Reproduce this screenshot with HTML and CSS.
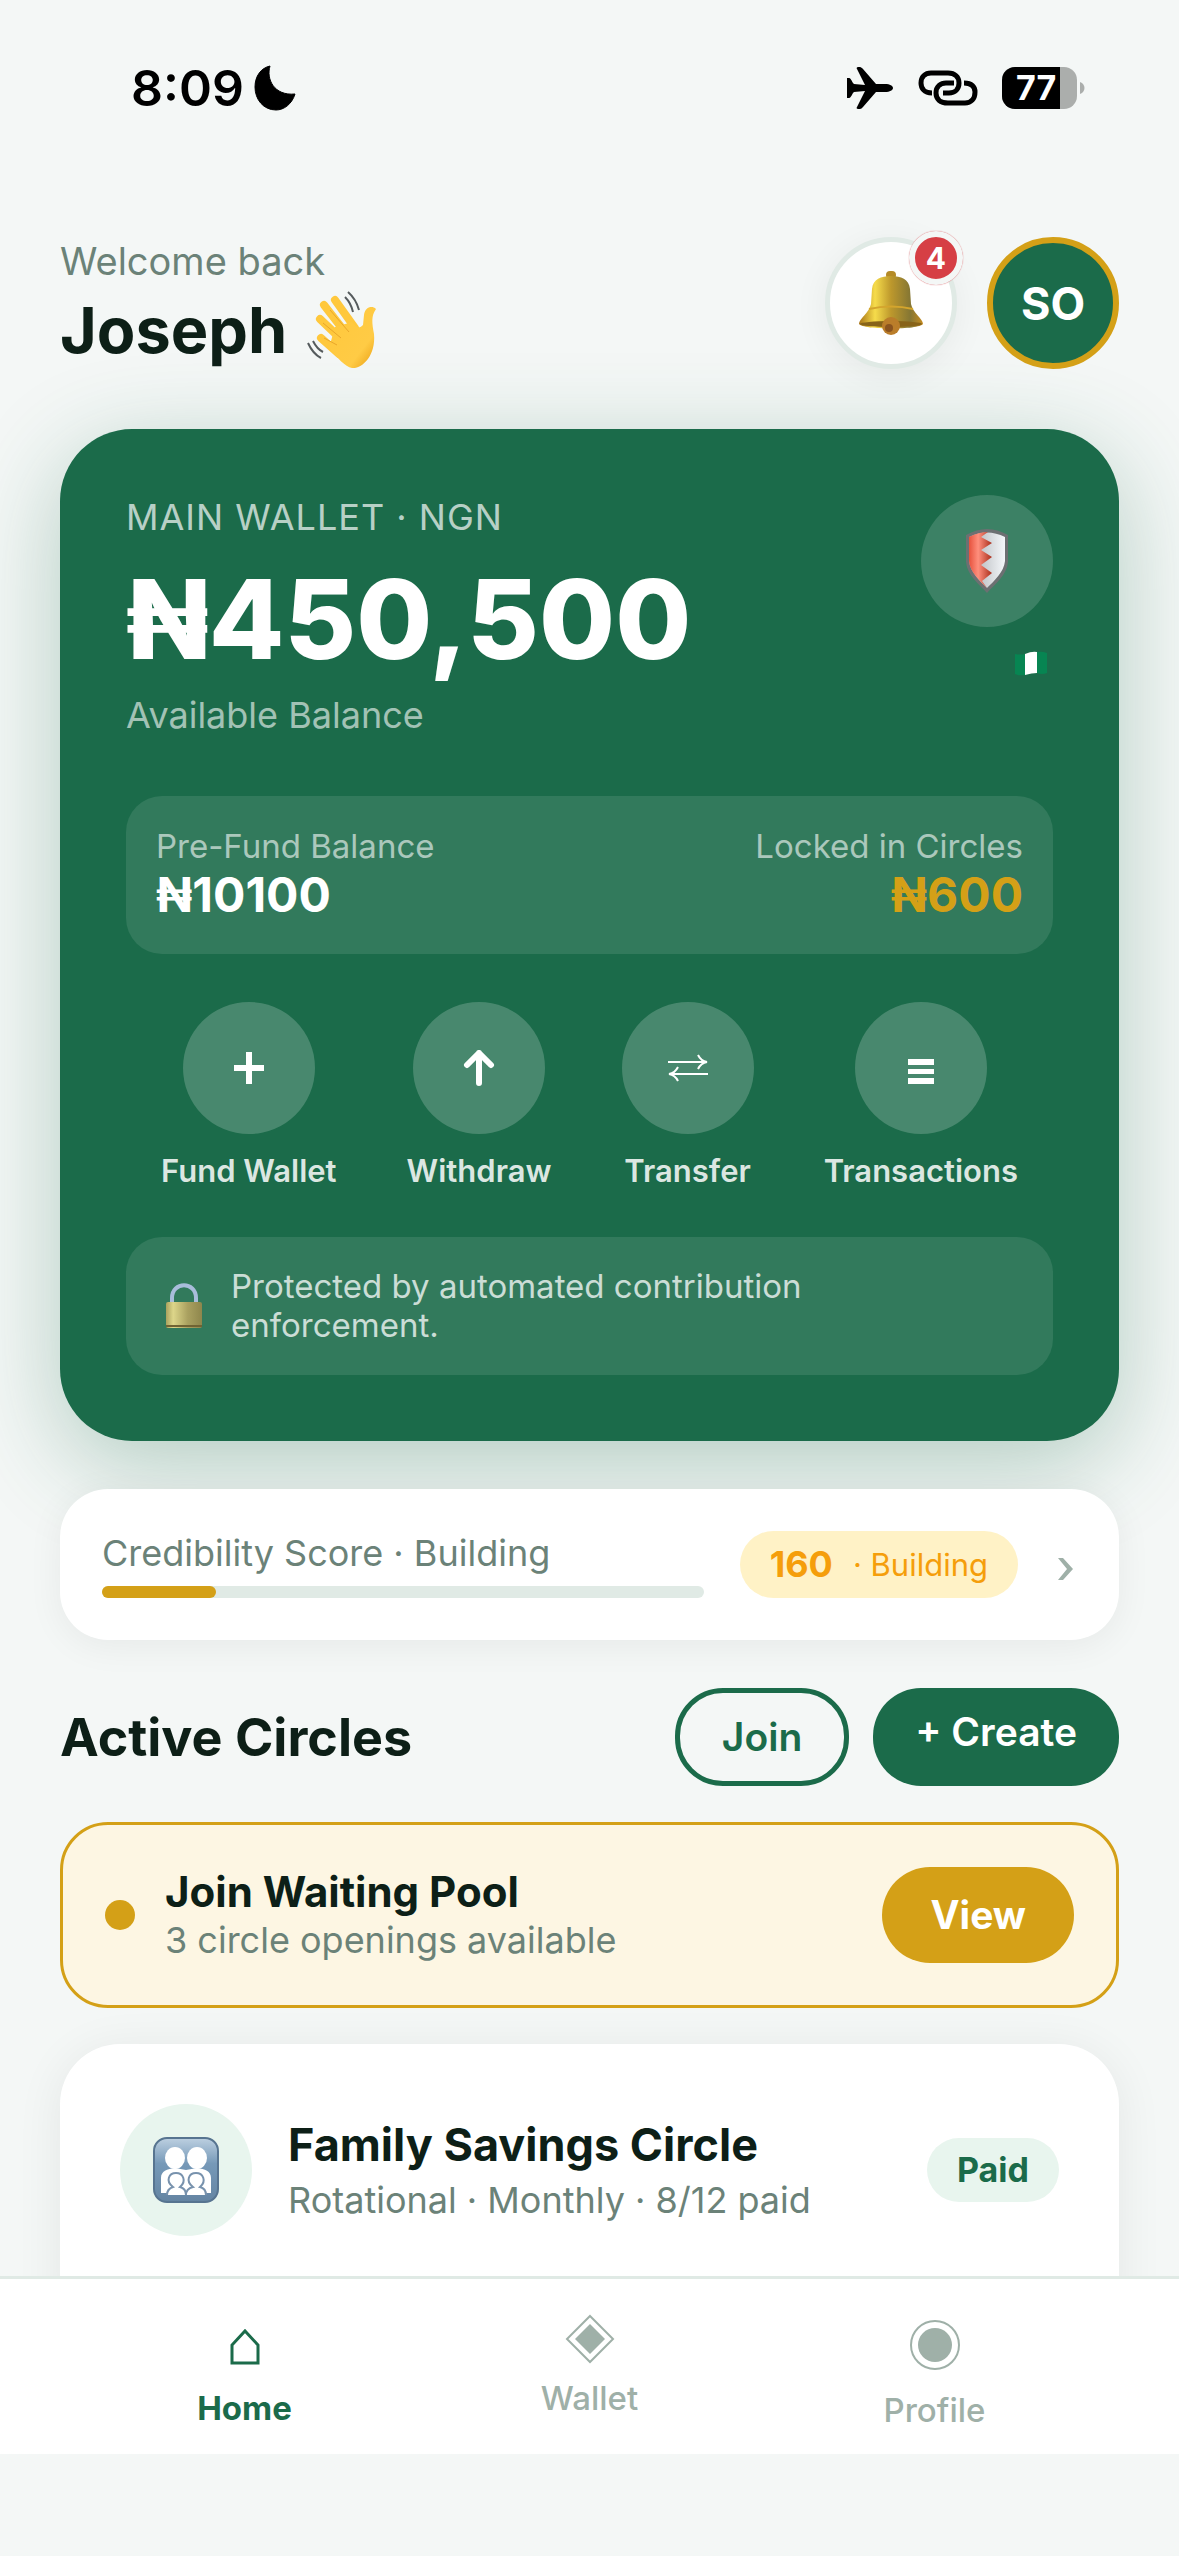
FILE: index.html
```html
<!DOCTYPE html>
<html lang="en">
<head>
  <meta charset="UTF-8" />
  <meta name="viewport" content="width=device-width, initial-scale=1.0"/>
  <title>Home</title>
  <link rel="stylesheet" href="styles.css">
</head>
<body>
  <div class="status-bar">
    <div class="status-left">
      <span>8:09</span>
      <svg width="42" height="46" viewBox="0 0 42 46"><path d="M16 1C12 14 20 31 41 29C38 39 30 45 22 45C9 45 1 34 1 22C1 11 7 3 16 1Z" stroke="#000" stroke-width="1" stroke-linejoin="round"/></svg>
    </div>
    <div class="status-right">
      <svg width="48" height="42" viewBox="0 0 48 42"><path d="M1 11H3C4 11 5 12 7 16L8 17L19 18L11 2C10 1 11 0 12 0H14C15 0 16 1 17 2L30 17H39C44 17 47 19 47 21C47 23 44 25 39 25H30L17 40C16 41 15 42 14 42H12C11 42 10 41 11 40L19 24L8 25L7 26C5 30 4 31 3 31H1Z"/></svg>
      <svg class="link-icon" width="60" height="36" viewBox="0 0 60 36" fill="none" stroke="#000" stroke-width="5"><path d="M14 23C6 23 3 18 3 13C3 7 7 3 13 3H30C37 3 41 7 41 13C41 19 37 23 31 23H25"/><path d="M46 13C54 13 57 17 57 22C57 29 53 33 47 33H30C22 33 18 29 18 23C18 16 23 13 28 13H36"/></svg>
      <div class="battery"><span class="battery-level">77</span></div>
      <svg class="battery-tip" width="5" height="14" viewBox="0 0 5 14"><path d="M0 1C6 3 6 11 0 13Z" fill="#abaeac"/></svg>
    </div>
  </div>

  <main>
    <header class="header">
      <div class="greeting">
        <span class="welcome">Welcome back</span>
        <h1>Joseph
          <svg width="70" height="78" viewBox="0 0 70 78" role="img" aria-label="Waving hand">
            <defs><linearGradient id="hand" x1="0" y1="0" x2="1" y2="1"><stop offset="0" stop-color="#ffc83c"/><stop offset=".7" stop-color="#ffcb45"/><stop offset="1" stop-color="#e79a0d"/></linearGradient></defs>
            <g stroke="#ffc83c" stroke-linecap="round" fill="none"><path d="M28 9L48 37" stroke-width="8"/><path d="M17 14L38 41" stroke-width="8"/><path d="M13 28L35 49" stroke-width="8"/><path d="M14 47L32 63" stroke-width="8"/></g>
            <path d="M28 36L45 31Q51 40 56 34L57 24C58 16 65 14 69 18C64 25 65 32 67 43C69 65 55 78 45 77C38 76 31 67 22 57Z" fill="url(#hand)"/>
            <path d="M23 19L42 41M16 32L34 47M17 47L30 54" stroke="#e9a72a" stroke-width="1" fill="none"/>
            <path d="M41 1Q49 8 52 19M38 6Q44 12 46 21M1 52Q6 63 14 67M6 50Q10 58 16 61" fill="none" stroke="#555b5d" stroke-width="2"/>
          </svg>
        </h1>
      </div>
      <div class="header-actions">
        <button class="bell-btn" aria-label="Notifications">
          <svg width="66" height="66" viewBox="0 0 66 66">
            <defs><linearGradient id="gold"><stop offset="0" stop-color="#a87417"/><stop offset=".25" stop-color="#f6dc4b"/><stop offset=".5" stop-color="#bd982c"/><stop offset=".8" stop-color="#857633"/><stop offset="1" stop-color="#c58b20"/></linearGradient></defs>
            <rect x="28" y="1" width="10" height="8" rx="4" fill="#b58b27"/>
            <path d="M1 54C1 49 11 43 13 34L14 19C15 9 23 6 33 6C43 6 51 9 52 19L53 34C55 43 65 49 65 54C61 60 5 60 1 54Z" fill="url(#gold)"/>
            <path d="M11 39Q33 34 55 39" stroke="#d4a52d" stroke-width="2" fill="none"/>
            <ellipse cx="33" cy="54" rx="31" ry="3" fill="#876319"/>
            <circle cx="33" cy="56" r="9" fill="#ba7d2a"/><circle cx="31" cy="58" r="4" fill="#8b541f"/>
          </svg>
          <span class="badge">4</span>
        </button>
        <button class="avatar">SO</button>
      </div>
    </header>

    <section class="wallet">
      <div class="wallet-top">
        <div class="wallet-balance">
          <span class="wallet-label">MAIN WALLET · NGN</span>
          <span class="amount">₦450,500</span>
          <span class="available">Available Balance</span>
        </div>
        <div class="wallet-side">
          <div class="shield">
            <svg width="44" height="66" viewBox="0 0 44 66">
              <defs><linearGradient id="red"><stop offset="0" stop-color="#e6523d"/><stop offset=".4" stop-color="#ff8f7d"/><stop offset="1" stop-color="#a92e1b"/></linearGradient><linearGradient id="silver"><stop offset="0" stop-color="#a9acb0"/><stop offset="1" stop-color="#f4f7fa"/></linearGradient></defs>
              <path d="M1 7Q22-5 43 7V34C42 47 30 56 22 65C14 56 2 47 1 34Z" fill="#6c7072"/>
              <path d="M4 9Q22 0 40 9V33C39 44 29 53 22 60C15 53 5 44 4 33Z" fill="url(#silver)"/>
              <path d="M4 9Q14 4 23 4L16 9L27 15L16 22L27 29L16 37L27 45L17 53L22 60C15 53 5 44 4 33Z" fill="url(#red)"/>
            </svg>
          </div>
          <svg class="flag" width="34" height="25" viewBox="0 0 34 25"><path d="M1 3Q6 4 11 3V24Q5 25 1 23Z" fill="#078552"/><path d="M11 3Q18 0 23 1V22Q18 22 11 24Z" fill="#fff"/><path d="M23 1Q28 0 33 2V22Q28 24 23 22Z" fill="#078552"/></svg>
        </div>
      </div>

      <div class="sub-balances">
        <div class="sub-balance">
          <span class="sub-label">Pre-Fund Balance</span>
          <span class="sub-value">₦10100</span>
        </div>
        <div class="sub-balance right">
          <span class="sub-label">Locked in Circles</span>
          <span class="sub-value gold">₦600</span>
        </div>
      </div>

      <div class="actions">
        <button class="action">
          <span class="action-icon"><svg width="32" height="32" viewBox="0 0 32 32" stroke="#fff" stroke-width="6"><path d="M16 0V32M1 16H31"/></svg></span>
          Fund Wallet
        </button>
        <button class="action">
          <span class="action-icon"><svg width="32" height="36" viewBox="0 0 32 36" fill="none" stroke="#fff" stroke-width="6" stroke-linecap="round" stroke-linejoin="round"><path d="M16 33V3M4 15L16 3L28 15"/></svg></span>
          Withdraw
        </button>
        <button class="action">
          <span class="action-icon"><svg width="42" height="28" viewBox="0 0 42 28" fill="none" stroke="#fff" stroke-width="2"><path d="M1 8H40M31 1Q34 7 40 8Q34 9 31 15M41 20H2M11 13Q8 19 2 20Q8 21 11 27"/></svg></span>
          Transfer
        </button>
        <button class="action">
          <span class="action-icon"><svg width="26" height="32" viewBox="0 0 26 32" fill="#fff"><path d="M0 7H26V13H0ZM0 17H26V22H0ZM0 26H26V32H0Z"/></svg></span>
          Transactions
        </button>
      </div>

      <div class="protected">
        <svg width="40" height="46" viewBox="0 0 40 46">
          <defs><linearGradient id="lock"><stop offset="0" stop-color="#aaa25e"/><stop offset=".2" stop-color="#ddd68a"/><stop offset=".6" stop-color="#aaa160"/><stop offset="1" stop-color="#8e864c"/></linearGradient></defs>
          <path d="M8 20V15C8-2 32-2 32 15V20" fill="none" stroke="#a9bddb" stroke-width="4"/>
          <rect x="2" y="19" width="36" height="26" rx="2" fill="url(#lock)"/><path d="M2 43H38" stroke="#716333" stroke-width="2"/>
        </svg>
        <p>Protected by automated contribution<br>enforcement.</p>
      </div>
    </section>

    <section class="score">
      <div class="score-info">
        <span class="score-title">Credibility Score · Building</span>
        <div class="bar"><div class="bar-fill" style="width: 19%"></div></div>
      </div>
      <div class="score-badge"><strong>160</strong><span>· Building</span></div>
      <svg width="23" height="32" viewBox="0 0 23 32" fill="#9fb0a8"><path d="M4 9H9L19 20L9 31H4L13 20Z"/></svg>
    </section>

    <div class="section-head">
      <h2>Active Circles</h2>
      <div class="section-actions">
        <button class="btn-join">Join</button>
        <button class="btn-create">+ Create</button>
      </div>
    </div>

    <section class="pool">
      <span class="dot"></span>
      <div class="pool-text">
        <h3>Join Waiting Pool</h3>
        <p>3 circle openings available</p>
      </div>
      <button class="btn-view">View</button>
    </section>

    <section class="circle-card">
      <div class="circle-icon">
        <svg width="66" height="66" viewBox="0 0 66 66">
          <defs><linearGradient id="tile" x1="0" y1="0" x2="0" y2="1"><stop offset="0" stop-color="#bdd0e1"/><stop offset=".4" stop-color="#7699b8"/><stop offset="1" stop-color="#6484a2"/></linearGradient></defs>
          <rect x="1" y="1" width="64" height="64" rx="13" fill="url(#tile)" stroke="#577490" stroke-width="2"/>
          <g fill="#fff"><ellipse cx="22" cy="21" rx="10" ry="11"/><ellipse cx="44" cy="21" rx="10" ry="11"/><path d="M8 56V41C8 34 14 32 22 31L33 33L44 31C52 32 58 34 58 41V56Z"/></g>
          <g fill="#fff" stroke="#7892ad" stroke-width="2"><path d="M14 58C14 53 17 51 20 50C12 44 16 36 23 36C30 36 34 44 27 50C31 51 33 54 33 58"/><path d="M33 58C33 54 36 51 40 50C32 44 36 36 43 36C50 36 54 44 47 50C51 51 53 54 53 58"/></g>
        </svg>
      </div>
      <div class="circle-text">
        <h3>Family Savings Circle</h3>
        <p>Rotational · Monthly · 8/12 paid</p>
      </div>
      <span class="paid">Paid</span>
    </section>
  </main>

  <nav class="tabs">
    <a href="#" class="active">
      <svg width="50" height="60" viewBox="0 0 50 60" fill="none" stroke="#1b6b4a" stroke-width="3"><path d="M12 49V31L25 17L38 31V49Z"/></svg>
      Home
    </a>
    <a href="#">
      <svg width="50" height="50" viewBox="0 0 50 50"><path d="M25 2L48 25L25 48L2 25Z" fill="none" stroke="#9fb0a8" stroke-width="2"/><path d="M25 10L40 25L25 40L10 25Z" fill="#9fb0a8"/></svg>
      Wallet
    </a>
    <a href="#">
      <svg width="50" height="62" viewBox="0 0 50 62"><circle cx="25" cy="31" r="24" fill="none" stroke="#9fb0a8" stroke-width="2"/><circle cx="25" cy="31" r="17" fill="#9fb0a8"/></svg>
      Profile
    </a>
  </nav>
</body>
</html>
```
FILE: styles.css
```css
* {
  box-sizing: border-box;
}
body {
  margin: 0;
  height: 100vh;
  padding-bottom: 102px;
  display: flex;
  flex-direction: column;
  overflow: hidden;
  background: #f4f7f6;
  color: #0d1f17;
  font-family: Inter, "Liberation Sans", sans-serif;
  font-size: 36px;
}
h1, h2, h3, p {
  margin: 0;
}
button {
  border: none;
  padding: 0;
  background: none;
  font-family: inherit;
  cursor: pointer;
}
svg {
  display: block;
  flex: none;
}

/* status bar */
.status-bar {
  display: flex;
  justify-content: space-between;
  align-items: center;
  flex: none;
  height: 175px;
  padding: 0 94px 0 131px;
  color: #000;
}
.status-left, .status-right {
  display: flex;
  align-items: center;
}
.status-left {
  gap: 10px;
  font-size: 50px;
  font-weight: 600;
}
.link-icon {
  margin: 0 24px;
}
.battery {
  width: 75px;
  height: 42px;
  border-radius: 13px;
  overflow: hidden;
  background: #abaeac;
}
.battery-level {
  display: block;
  width: 58px;
  padding-left: 14px;
  background: #000;
  color: #fff;
  font-size: 34px;
  font-weight: 700;
  line-height: 42px;
}
.battery-tip {
  margin-left: 3px;
}

main {
  flex: 1;
  min-height: 0;
  overflow: hidden;
  padding: 62px 60px 0;
}

/* header */
.header {
  display: flex;
  justify-content: space-between;
  align-items: center;
  margin-bottom: 60px;
}
.greeting {
  display: flex;
  flex-direction: column;
  gap: 6px;
}
.welcome {
  font-size: 38px;
  line-height: 48px;
  color: #6b8278;
}
h1 {
  display: flex;
  align-items: center;
  gap: 20px;
  font-size: 63px;
  line-height: 78px;
}
.header-actions {
  display: flex;
  gap: 30px;
}
.bell-btn, .avatar {
  width: 132px;
  height: 132px;
  border-radius: 50%;
}
.bell-btn {
  position: relative;
  display: flex;
  align-items: center;
  justify-content: center;
  background: #fff;
  border: 5px solid #e0eae5;
  box-shadow: 0 6px 36px rgba(0, 0, 0, 0.06);
}
.badge {
  position: absolute;
  top: -11px;
  right: -11px;
  width: 54px;
  height: 54px;
  border: 6px solid #f4f7f6;
  border-radius: 50%;
  background: #d63f45;
  box-shadow: 0 0 1px #d63f45;
  color: #fff;
  font-size: 30px;
  font-weight: 700;
  line-height: 42px;
}
.avatar {
  border: 6px solid #d4a017;
  background: #1b6b4a;
  color: #fff;
  font-size: 45px;
  font-weight: 700;
}

/* wallet card */
.wallet {
  padding: 66px;
  margin-bottom: 48px;
  border-radius: 72px;
  background: #1b6b4a;
  color: #fff;
  box-shadow: 0 24px 96px rgba(27, 107, 74, 0.3);
}
.wallet-top {
  display: flex;
  justify-content: space-between;
  margin-bottom: 59px;
}
.wallet-balance {
  display: flex;
  flex-direction: column;
}
.wallet-label {
  margin-bottom: 6px;
  line-height: 44px;
  letter-spacing: 1px;
  color: rgba(255, 255, 255, 0.7);
}
.amount {
  font-size: 110px;
  font-weight: 800;
  line-height: 148px;
}
.available {
  line-height: 44px;
  color: rgba(255, 255, 255, 0.6);
}
.wallet-side {
  display: flex;
  flex-direction: column;
  align-items: flex-end;
  gap: 24px;
}
.shield {
  display: flex;
  align-items: center;
  justify-content: center;
  width: 132px;
  height: 132px;
  border-radius: 50%;
  background: rgba(255, 255, 255, 0.15);
}
.flag {
  margin-right: 5px;
}
.sub-balances {
  display: flex;
  justify-content: space-between;
  padding: 30px;
  margin-bottom: 48px;
  border-radius: 36px;
  background: rgba(255, 255, 255, 0.1);
}
.sub-balance {
  display: flex;
  flex-direction: column;
}
.right {
  align-items: flex-end;
}
.sub-label {
  font-size: 33px;
  line-height: 40px;
  color: rgba(255, 255, 255, 0.6);
}
.sub-value {
  font-size: 48px;
  font-weight: 700;
  line-height: 58px;
}
.gold {
  color: #d4a017;
}
.actions {
  display: flex;
  justify-content: space-around;
  margin-bottom: 48px;
}
.action {
  display: flex;
  flex-direction: column;
  align-items: center;
  gap: 18px;
  color: rgba(255, 255, 255, 0.85);
  font-size: 31px;
  font-weight: 600;
  line-height: 37px;
}
.action-icon {
  display: flex;
  align-items: center;
  justify-content: center;
  width: 132px;
  height: 132px;
  border-radius: 50%;
  background: rgba(255, 255, 255, 0.2);
}
.protected {
  display: flex;
  align-items: center;
  gap: 27px;
  padding: 30px 38px;
  border-radius: 36px;
  background: rgba(255, 255, 255, 0.1);
  color: rgba(255, 255, 255, 0.75);
  font-size: 33px;
  line-height: 39px;
}

/* credibility */
.score {
  display: flex;
  align-items: center;
  gap: 36px;
  padding: 42px;
  margin-bottom: 48px;
  border-radius: 48px;
  background: #fff;
  box-shadow: 0 6px 36px rgba(0, 0, 0, 0.06);
}
.score-info {
  flex: 1;
}
.score-title {
  display: block;
  margin-bottom: 10px;
  line-height: 45px;
  color: #6b8278;
}
.bar {
  height: 12px;
  border-radius: 6px;
  background: #e0eae5;
}
.bar-fill {
  height: 100%;
  border-radius: 6px;
  background: #d4a017;
}
.score-badge {
  display: flex;
  align-items: center;
  gap: 20px;
  padding: 0 30px;
  border-radius: 34px;
  background: #fff2c6;
  color: #f59e0b;
  font-size: 31px;
  line-height: 67px;
}
.score-badge strong {
  font-size: 36px;
}

/* active circles */
.section-head {
  display: flex;
  align-items: center;
  justify-content: space-between;
  margin-bottom: 36px;
}
h2 {
  font-size: 52px;
}
.section-actions {
  display: flex;
  gap: 24px;
}
.btn-join, .btn-create, .btn-view {
  padding: 20px 42px;
  border-radius: 48px;
  font-size: 39px;
  font-weight: 600;
  line-height: 48px;
}
.btn-join {
  border: 5px solid #1b6b4a;
  color: #1b6b4a;
}
.btn-create {
  display: flex;
  align-items: flex-start;
  background: #1b6b4a;
  color: #fff;
}
.pool {
  display: flex;
  align-items: center;
  gap: 30px;
  padding: 42px;
  margin-bottom: 36px;
  border: 3px solid #d4a017;
  border-radius: 48px;
  background: #fdf6e3;
}
.dot {
  width: 30px;
  height: 30px;
  border-radius: 50%;
  background: #d4a017;
}
.pool-text, .circle-text {
  flex: 1;
}
.pool h3 {
  font-size: 42px;
  line-height: 50px;
}
.pool p {
  line-height: 46px;
  color: #6b8278;
}
.btn-view {
  padding: 24px 48px;
  background: #d4a017;
  color: #fff;
  font-weight: 700;
}
.circle-card {
  display: flex;
  align-items: center;
  gap: 36px;
  padding: 60px 60px 120px;
  border-radius: 60px;
  background: #fff;
  box-shadow: 0 6px 48px rgba(0, 0, 0, 0.07);
}
.circle-icon {
  display: flex;
  align-items: center;
  justify-content: center;
  width: 132px;
  height: 132px;
  border-radius: 50%;
  background: #e8f5ee;
}
.circle-card h3 {
  font-size: 45px;
  line-height: 60px;
}
.circle-card p {
  line-height: 50px;
  color: #6b8278;
}
.paid {
  padding: 0 30px;
  border-radius: 32px;
  background: #e8f5ee;
  color: #1b6b4a;
  font-size: 34px;
  font-weight: 700;
  line-height: 64px;
}

/* bottom tabs */
.tabs {
  position: relative;
  display: flex;
  flex: none;
  padding: 35px 72px 24px;
  border-top: 3px solid #e0eae5;
  background: #fff;
}
.tabs a {
  display: flex;
  flex: 1;
  flex-direction: column;
  align-items: center;
  gap: 14px;
  color: #9fb0a8;
  font-size: 33px;
  font-weight: 500;
  line-height: 40px;
  text-decoration: none;
}
.tabs .active {
  color: #1b6b4a;
  font-weight: 700;
}
```
